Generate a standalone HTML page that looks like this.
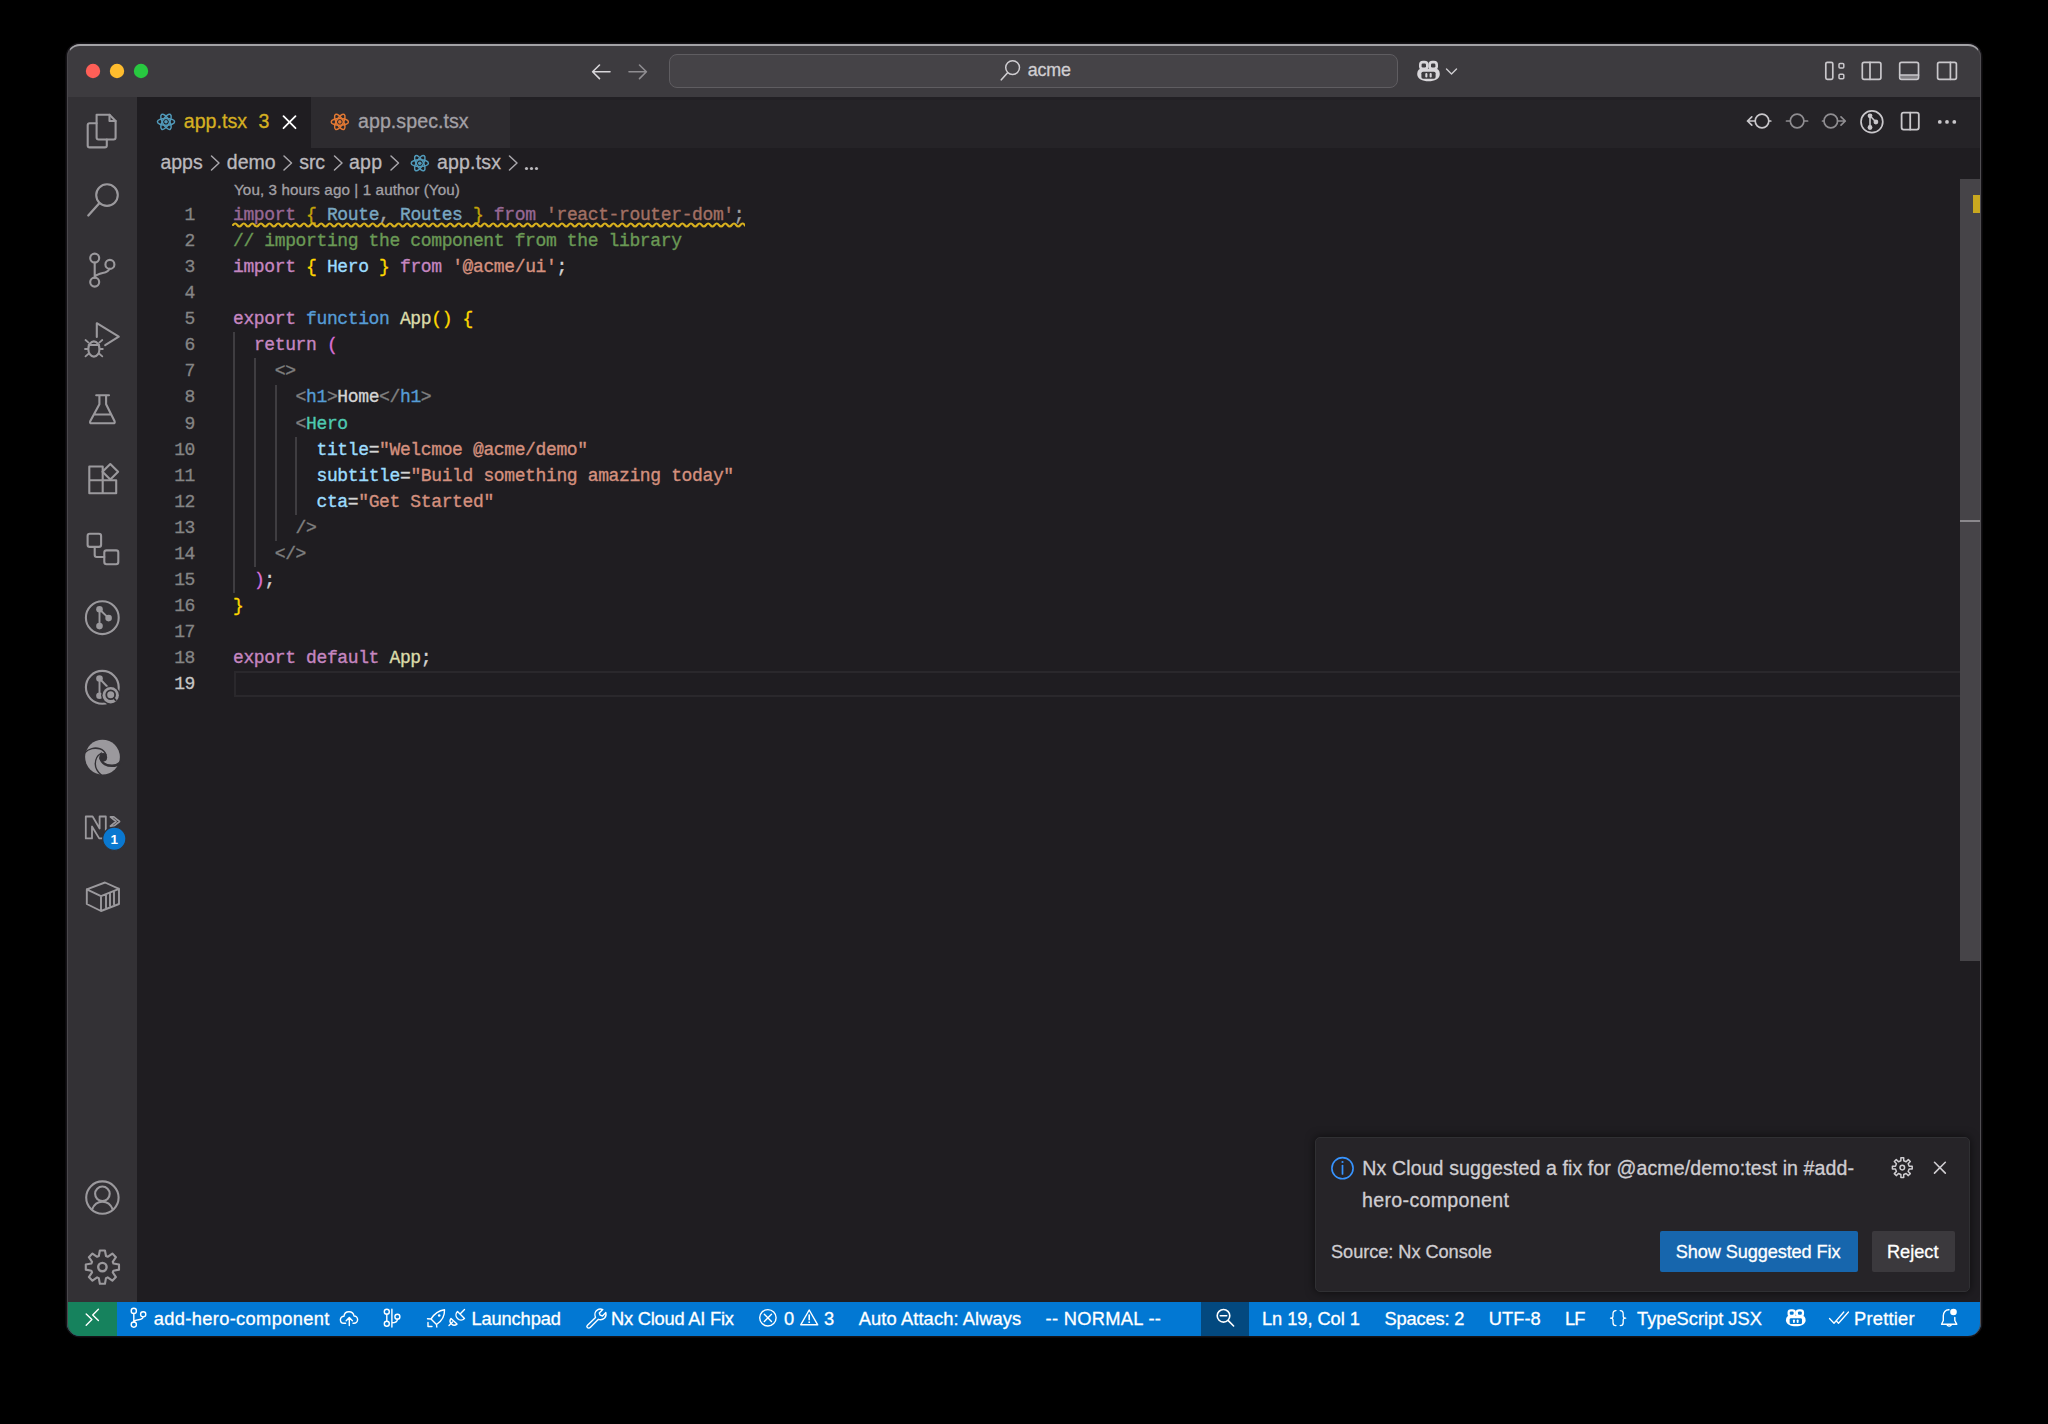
<!DOCTYPE html>
<html><head><meta charset="utf-8">
<style>
*{margin:0;padding:0;box-sizing:border-box}
html,body{width:2048px;height:1424px;background:#000;overflow:hidden}
body{position:relative;font-family:"Liberation Sans",sans-serif}
.a{position:absolute;white-space:pre;-webkit-text-stroke:0.3px currentColor}
#win{position:absolute;left:67px;top:44px;width:1914px;height:1292px;border-radius:13px;background:#1f1d21;overflow:hidden;box-shadow:0 0 0 1.5px #141216}
#P{position:absolute;left:-67px;top:-44px;width:2048px;height:1424px}
#hl{position:absolute;left:67px;top:44px;width:1914px;height:1292px;border-radius:13px;border-top:2px solid #a3a2a6;border-left:1.5px solid #4a484c;border-right:1.5px solid #504e52;pointer-events:none;z-index:50}
.bx{position:absolute}
.code{position:absolute;left:233px;font-family:"Liberation Mono",monospace;font-size:18px;letter-spacing:-0.37px;white-space:pre;-webkit-text-stroke:0.35px currentColor;height:26.04px;line-height:26.04px;color:#d4d4d4}
.ln{position:absolute;left:140px;width:55px;text-align:right;font-family:"Liberation Mono",monospace;-webkit-text-stroke:0.3px currentColor;font-size:18px;letter-spacing:-0.37px;height:26.04px;line-height:26.04px;color:#858585}
.k{color:#c586c0}.f{color:#569cd6}.b1{color:#ffd700}.b2{color:#da70d6}.v{color:#9cdcfe}.s{color:#d4907e}.c{color:#6a9955}.fn{color:#dcdcaa}.p{color:#808080}.t{color:#4ec9b0}.w{color:#d4d4d4}
svg.ov{position:absolute;left:0;top:0;width:2048px;height:1424px;overflow:visible}
</style></head>
<body>
<div id="win"><div id="P">
<div class="bx" style="left:66px;top:44px;width:1916px;height:53px;background:#3d3b3f;"></div>
<div class="bx" style="left:66px;top:97px;width:71px;height:1205px;background:#333135;"></div>
<div class="bx" style="left:137px;top:97px;width:1845px;height:51px;background:#252327;"></div>
<div class="bx" style="left:137px;top:97px;width:174px;height:51px;background:#1f1d21;"></div>
<div class="bx" style="left:311px;top:97px;width:199px;height:51px;background:#2d2b2f;"></div>
<div class="bx" style="left:510px;top:97px;width:1472px;height:3px;background:#222024;"></div>
<div class="bx" style="left:1960px;top:179px;width:21px;height:782px;background:#464448;"></div>
<div class="bx" style="left:1960px;top:520px;width:21px;height:2px;background:#8a888c;"></div>
<div class="bx" style="left:1973px;top:195px;width:8px;height:18px;background:#c9a81f;"></div>
<div class="bx" style="left:234px;top:671px;width:1726px;height:26px;border:2px solid #2a282c;border-right:none"></div>
<div class="bx" style="left:66px;top:1302px;width:1916px;height:34px;background:#0278d3;"></div>
<div class="bx" style="left:66px;top:1302px;width:51px;height:34px;background:#16825d;"></div>
<div class="bx" style="left:1201px;top:1302px;width:48px;height:34px;background:#03497f;"></div>
<div class="bx" style="left:669px;top:54px;width:729px;height:34px;border-radius:8px;background:#454347;border:1.5px solid #5f5d61"></div>
<div class="a t0" style="left:1027.70px;top:62.35px;font-size:17.9px;line-height:17.9px;color:#d0ced2;letter-spacing:-0.15px;">acme</div>
<div class="a t0" style="left:183.80px;top:111.81px;font-size:19.6px;line-height:19.6px;color:#d5b021;">app.tsx</div>
<div class="a t0" style="left:258.50px;top:111.81px;font-size:19.6px;line-height:19.6px;color:#d5b021;">3</div>
<div class="a t0" style="left:358.00px;top:112.11px;font-size:19.6px;line-height:19.6px;color:#a3a1a6;letter-spacing:0.059px;">app.spec.tsx</div>
<div class="a t0" style="left:160.50px;top:153.19px;font-size:19.5px;line-height:19.5px;color:#bbb9bd;letter-spacing:-0.033px;">apps</div>
<div class="a t0" style="left:226.80px;top:153.19px;font-size:19.5px;line-height:19.5px;color:#bbb9bd;">demo</div>
<div class="a t0" style="left:299.30px;top:153.19px;font-size:19.5px;line-height:19.5px;color:#bbb9bd;letter-spacing:-0.15px;">src</div>
<div class="a t0" style="left:349.00px;top:153.19px;font-size:19.5px;line-height:19.5px;color:#bbb9bd;letter-spacing:0.225px;">app</div>
<div class="a t0" style="left:437.00px;top:153.19px;font-size:19.5px;line-height:19.5px;color:#bbb9bd;letter-spacing:0.192px;">app.tsx</div>
<div class="a t0" style="left:234.00px;top:182.43px;font-size:15.2px;line-height:15.2px;color:#a3a1a6;letter-spacing:0.108px;">You, 3 hours ago | 1 author (You)</div>
<div class="ln" style="top:202.19px;color:#858585">1</div>
<div class="code" style="top:202.19px;opacity:0.72;"><span class="k">import</span><span class="w"> </span><span class="b1">{</span><span class="w"> </span><span class="v">Route</span><span class="w">, </span><span class="v">Routes</span><span class="w"> </span><span class="b1">}</span><span class="w"> </span><span class="k">from</span><span class="w"> </span><span class="s">&#x27;react-router-dom&#x27;</span><span class="w">;</span></div>
<div class="ln" style="top:228.23px;color:#858585">2</div>
<div class="code" style="top:228.23px;"><span class="c">// importing the component from the library</span></div>
<div class="ln" style="top:254.27px;color:#858585">3</div>
<div class="code" style="top:254.27px;"><span class="k">import</span><span class="w"> </span><span class="b1">{</span><span class="w"> </span><span class="v">Hero</span><span class="w"> </span><span class="b1">}</span><span class="w"> </span><span class="k">from</span><span class="w"> </span><span class="s">&#x27;@acme/ui&#x27;</span><span class="w">;</span></div>
<div class="ln" style="top:280.31px;color:#858585">4</div>
<div class="ln" style="top:306.35px;color:#858585">5</div>
<div class="code" style="top:306.35px;"><span class="k">export</span><span class="w"> </span><span class="f">function</span><span class="w"> </span><span class="fn">App</span><span class="b1">()</span><span class="w"> </span><span class="b1">{</span></div>
<div class="ln" style="top:332.39px;color:#858585">6</div>
<div class="code" style="top:332.39px;"><span class="w">  </span><span class="k">return</span><span class="w"> </span><span class="b2">(</span></div>
<div class="ln" style="top:358.43px;color:#858585">7</div>
<div class="code" style="top:358.43px;"><span class="w">    </span><span class="p">&lt;&gt;</span></div>
<div class="ln" style="top:384.47px;color:#858585">8</div>
<div class="code" style="top:384.47px;"><span class="w">      </span><span class="p">&lt;</span><span class="f">h1</span><span class="p">&gt;</span><span class="w">Home</span><span class="p">&lt;/</span><span class="f">h1</span><span class="p">&gt;</span></div>
<div class="ln" style="top:410.51px;color:#858585">9</div>
<div class="code" style="top:410.51px;"><span class="w">      </span><span class="p">&lt;</span><span class="t">Hero</span></div>
<div class="ln" style="top:436.55px;color:#858585">10</div>
<div class="code" style="top:436.55px;"><span class="w">        </span><span class="v">title</span><span class="w">=</span><span class="s">&quot;Welcmoe @acme/demo&quot;</span></div>
<div class="ln" style="top:462.59px;color:#858585">11</div>
<div class="code" style="top:462.59px;"><span class="w">        </span><span class="v">subtitle</span><span class="w">=</span><span class="s">&quot;Build something amazing today&quot;</span></div>
<div class="ln" style="top:488.63px;color:#858585">12</div>
<div class="code" style="top:488.63px;"><span class="w">        </span><span class="v">cta</span><span class="w">=</span><span class="s">&quot;Get Started&quot;</span></div>
<div class="ln" style="top:514.67px;color:#858585">13</div>
<div class="code" style="top:514.67px;"><span class="w">      </span><span class="p">/&gt;</span></div>
<div class="ln" style="top:540.71px;color:#858585">14</div>
<div class="code" style="top:540.71px;"><span class="w">    </span><span class="p">&lt;/&gt;</span></div>
<div class="ln" style="top:566.75px;color:#858585">15</div>
<div class="code" style="top:566.75px;"><span class="w">  </span><span class="b2">)</span><span class="w">;</span></div>
<div class="ln" style="top:592.79px;color:#858585">16</div>
<div class="code" style="top:592.79px;"><span class="b1">}</span></div>
<div class="ln" style="top:618.83px;color:#858585">17</div>
<div class="ln" style="top:644.87px;color:#858585">18</div>
<div class="code" style="top:644.87px;"><span class="k">export</span><span class="w"> </span><span class="k">default</span><span class="w"> </span><span class="fn">App</span><span class="w">;</span></div>
<div class="ln" style="top:670.91px;color:#c6c6c6">19</div>
<div class="bx" style="left:232.8px;top:332.4px;width:2px;height:260.4px;background:#3f3d41;"></div>
<div class="bx" style="left:253.7px;top:358.4px;width:2px;height:208.3px;background:#3f3d41;"></div>
<div class="bx" style="left:274.5px;top:384.5px;width:2px;height:156.2px;background:#3f3d41;"></div>
<div class="bx" style="left:295.4px;top:436.6px;width:2px;height:78.1px;background:#3f3d41;"></div>
<div class="a t0" style="left:153.70px;top:1309.51px;font-size:18.3px;line-height:18.3px;color:#ffffff;letter-spacing:0.347px;">add-hero-component</div>
<div class="a t0" style="left:471.40px;top:1309.51px;font-size:18.3px;line-height:18.3px;color:#ffffff;letter-spacing:-0.119px;">Launchpad</div>
<div class="a t0" style="left:611.00px;top:1309.51px;font-size:18.3px;line-height:18.3px;color:#ffffff;letter-spacing:-0.214px;">Nx Cloud AI Fix</div>
<div class="a t0" style="left:784.00px;top:1309.51px;font-size:18.3px;line-height:18.3px;color:#ffffff;">0</div>
<div class="a t0" style="left:824.00px;top:1309.51px;font-size:18.3px;line-height:18.3px;color:#ffffff;">3</div>
<div class="a t0" style="left:858.70px;top:1309.51px;font-size:18.3px;line-height:18.3px;color:#ffffff;letter-spacing:0.111px;">Auto Attach: Always</div>
<div class="a t0" style="left:1045.50px;top:1309.51px;font-size:18.3px;line-height:18.3px;color:#ffffff;letter-spacing:0.305px;">-- NORMAL --</div>
<div class="a t0" style="left:1262.00px;top:1309.51px;font-size:18.3px;line-height:18.3px;color:#ffffff;letter-spacing:-0.064px;">Ln 19, Col 1</div>
<div class="a t0" style="left:1384.50px;top:1309.51px;font-size:18.3px;line-height:18.3px;color:#ffffff;letter-spacing:-0.163px;">Spaces: 2</div>
<div class="a t0" style="left:1488.80px;top:1309.51px;font-size:18.3px;line-height:18.3px;color:#ffffff;letter-spacing:0.037px;">UTF-8</div>
<div class="a t0" style="left:1565.00px;top:1309.51px;font-size:18.3px;line-height:18.3px;color:#ffffff;letter-spacing:-1.0px;">LF</div>
<div class="a t0" style="left:1637.00px;top:1309.51px;font-size:18.3px;line-height:18.3px;color:#ffffff;letter-spacing:-0.008px;">TypeScript JSX</div>
<div class="a t0" style="left:1854.00px;top:1309.51px;font-size:18.3px;line-height:18.3px;color:#ffffff;letter-spacing:0.229px;">Prettier</div>
<div class="bx" style="left:1315px;top:1137px;width:655px;height:155px;background:#262428;border:1px solid #303033;border-radius:5px;box-shadow:0 0 10px rgba(0,0,0,0.6)"></div>
<div class="a t0" style="left:1362.30px;top:1159.01px;font-size:19.6px;line-height:19.6px;color:#cfcdd1;letter-spacing:0.09px;">Nx Cloud suggested a fix for @acme/demo:test in #add-</div>
<div class="a t0" style="left:1362.00px;top:1191.41px;font-size:19.6px;line-height:19.6px;color:#cfcdd1;letter-spacing:0.327px;">hero-component</div>
<div class="a t0" style="left:1331.00px;top:1242.59px;font-size:18.2px;line-height:18.2px;color:#cfcdd1;letter-spacing:-0.05px;">Source: Nx Console</div>
<div class="bx" style="left:1660px;top:1231px;width:198px;height:41px;background:#1766ad;border-radius:2px;"></div>
<div class="a t0" style="left:1675.70px;top:1242.59px;font-size:18.2px;line-height:18.2px;color:#ffffff;letter-spacing:-0.115px;">Show Suggested Fix</div>
<div class="bx" style="left:1872px;top:1231px;width:83px;height:41px;background:#3b393d;border-radius:2px;"></div>
<div class="a t0" style="left:1887.00px;top:1242.59px;font-size:18.2px;line-height:18.2px;color:#ffffff;letter-spacing:-0.02px;">Reject</div>
<svg class="ov" viewBox="0 0 2048 1424" fill="none" stroke-linecap="round" stroke-linejoin="round">
<circle cx="93" cy="71" r="7.2" fill="#fe5f57"/>
<circle cx="117" cy="71" r="7.2" fill="#febc2e"/>
<circle cx="141" cy="71" r="7.2" fill="#28c840"/>
<ellipse cx="166" cy="121.8" rx="8.6" ry="3.4" transform="rotate(0 166 121.8)" stroke="#519aba" stroke-width="1.5"/><ellipse cx="166" cy="121.8" rx="8.6" ry="3.4" transform="rotate(60 166 121.8)" stroke="#519aba" stroke-width="1.5"/><ellipse cx="166" cy="121.8" rx="8.6" ry="3.4" transform="rotate(120 166 121.8)" stroke="#519aba" stroke-width="1.5"/><circle cx="166" cy="121.8" r="1.8" fill="#519aba"/>
<ellipse cx="339.8" cy="121.9" rx="8.6" ry="3.4" transform="rotate(0 339.8 121.9)" stroke="#e37933" stroke-width="1.5"/><ellipse cx="339.8" cy="121.9" rx="8.6" ry="3.4" transform="rotate(60 339.8 121.9)" stroke="#e37933" stroke-width="1.5"/><ellipse cx="339.8" cy="121.9" rx="8.6" ry="3.4" transform="rotate(120 339.8 121.9)" stroke="#e37933" stroke-width="1.5"/><circle cx="339.8" cy="121.9" r="1.8" fill="#e37933"/>
<ellipse cx="419.8" cy="163.2" rx="8.6" ry="3.4" transform="rotate(0 419.8 163.2)" stroke="#519aba" stroke-width="1.5"/><ellipse cx="419.8" cy="163.2" rx="8.6" ry="3.4" transform="rotate(60 419.8 163.2)" stroke="#519aba" stroke-width="1.5"/><ellipse cx="419.8" cy="163.2" rx="8.6" ry="3.4" transform="rotate(120 419.8 163.2)" stroke="#519aba" stroke-width="1.5"/><circle cx="419.8" cy="163.2" r="1.8" fill="#519aba"/>
<path d="M283.5 116.2 L295.5 128.2 M295.5 116.2 L283.5 128.2" stroke="#ffffff" stroke-width="1.8"/>
<path d="M211.5 156 L219.0 163 L211.5 170" stroke="#a8a6ab" stroke-width="1.5"/>
<path d="M284 156 L291.5 163 L284 170" stroke="#a8a6ab" stroke-width="1.5"/>
<path d="M334.5 156 L342.0 163 L334.5 170" stroke="#a8a6ab" stroke-width="1.5"/>
<path d="M391 156 L398.5 163 L391 170" stroke="#a8a6ab" stroke-width="1.5"/>
<path d="M509.5 156 L517.0 163 L509.5 170" stroke="#a8a6ab" stroke-width="1.5"/>
<circle cx="526.5" cy="168.5" r="1.6" fill="#bbb9bd"/>
<circle cx="531.5" cy="168.5" r="1.6" fill="#bbb9bd"/>
<circle cx="536.5" cy="168.5" r="1.6" fill="#bbb9bd"/>
<clipPath id="sqc"><rect x="232" y="215" width="513" height="20"/></clipPath><path d="M233 225 q 2.15 -2.9 4.30 0 q 2.15 2.9 4.30 0 q 2.15 -2.9 4.30 0 q 2.15 2.9 4.30 0 q 2.15 -2.9 4.30 0 q 2.15 2.9 4.30 0 q 2.15 -2.9 4.30 0 q 2.15 2.9 4.30 0 q 2.15 -2.9 4.30 0 q 2.15 2.9 4.30 0 q 2.15 -2.9 4.30 0 q 2.15 2.9 4.30 0 q 2.15 -2.9 4.30 0 q 2.15 2.9 4.30 0 q 2.15 -2.9 4.30 0 q 2.15 2.9 4.30 0 q 2.15 -2.9 4.30 0 q 2.15 2.9 4.30 0 q 2.15 -2.9 4.30 0 q 2.15 2.9 4.30 0 q 2.15 -2.9 4.30 0 q 2.15 2.9 4.30 0 q 2.15 -2.9 4.30 0 q 2.15 2.9 4.30 0 q 2.15 -2.9 4.30 0 q 2.15 2.9 4.30 0 q 2.15 -2.9 4.30 0 q 2.15 2.9 4.30 0 q 2.15 -2.9 4.30 0 q 2.15 2.9 4.30 0 q 2.15 -2.9 4.30 0 q 2.15 2.9 4.30 0 q 2.15 -2.9 4.30 0 q 2.15 2.9 4.30 0 q 2.15 -2.9 4.30 0 q 2.15 2.9 4.30 0 q 2.15 -2.9 4.30 0 q 2.15 2.9 4.30 0 q 2.15 -2.9 4.30 0 q 2.15 2.9 4.30 0 q 2.15 -2.9 4.30 0 q 2.15 2.9 4.30 0 q 2.15 -2.9 4.30 0 q 2.15 2.9 4.30 0 q 2.15 -2.9 4.30 0 q 2.15 2.9 4.30 0 q 2.15 -2.9 4.30 0 q 2.15 2.9 4.30 0 q 2.15 -2.9 4.30 0 q 2.15 2.9 4.30 0 q 2.15 -2.9 4.30 0 q 2.15 2.9 4.30 0 q 2.15 -2.9 4.30 0 q 2.15 2.9 4.30 0 q 2.15 -2.9 4.30 0 q 2.15 2.9 4.30 0 q 2.15 -2.9 4.30 0 q 2.15 2.9 4.30 0 q 2.15 -2.9 4.30 0 q 2.15 2.9 4.30 0 q 2.15 -2.9 4.30 0 q 2.15 2.9 4.30 0 q 2.15 -2.9 4.30 0 q 2.15 2.9 4.30 0 q 2.15 -2.9 4.30 0 q 2.15 2.9 4.30 0 q 2.15 -2.9 4.30 0 q 2.15 2.9 4.30 0 q 2.15 -2.9 4.30 0 q 2.15 2.9 4.30 0 q 2.15 -2.9 4.30 0 q 2.15 2.9 4.30 0 q 2.15 -2.9 4.30 0 q 2.15 2.9 4.30 0 q 2.15 -2.9 4.30 0 q 2.15 2.9 4.30 0 q 2.15 -2.9 4.30 0 q 2.15 2.9 4.30 0 q 2.15 -2.9 4.30 0 q 2.15 2.9 4.30 0 q 2.15 -2.9 4.30 0 q 2.15 2.9 4.30 0 q 2.15 -2.9 4.30 0 q 2.15 2.9 4.30 0 q 2.15 -2.9 4.30 0 q 2.15 2.9 4.30 0 q 2.15 -2.9 4.30 0 q 2.15 2.9 4.30 0 q 2.15 -2.9 4.30 0 q 2.15 2.9 4.30 0 q 2.15 -2.9 4.30 0 q 2.15 2.9 4.30 0 q 2.15 -2.9 4.30 0 q 2.15 2.9 4.30 0 q 2.15 -2.9 4.30 0 q 2.15 2.9 4.30 0 q 2.15 -2.9 4.30 0 q 2.15 2.9 4.30 0 q 2.15 -2.9 4.30 0 q 2.15 2.9 4.30 0 q 2.15 -2.9 4.30 0 q 2.15 2.9 4.30 0 q 2.15 -2.9 4.30 0 q 2.15 2.9 4.30 0 q 2.15 -2.9 4.30 0 q 2.15 2.9 4.30 0 q 2.15 -2.9 4.30 0 q 2.15 2.9 4.30 0 q 2.15 -2.9 4.30 0 q 2.15 2.9 4.30 0 q 2.15 -2.9 4.30 0 q 2.15 2.9 4.30 0 q 2.15 -2.9 4.30 0 q 2.15 2.9 4.30 0 q 2.15 -2.9 4.30 0 q 2.15 2.9 4.30 0 q 2.15 -2.9 4.30 0 q 2.15 2.9 4.30 0 q 2.15 -2.9 4.30 0 q 2.15 2.9 4.30 0" stroke="#d7b01e" stroke-width="2.1" clip-path="url(#sqc)"/>
<path d="M610 71.8 H593 M599.5 65 L592.6 71.8 L599.5 78.6" stroke="#d8d6da" stroke-width="1.6"/>
<path d="M629 71.8 H646 M639.5 65 L646.4 71.8 L639.5 78.6" stroke="#8f8d91" stroke-width="1.6"/>
<circle cx="1012.6" cy="67.6" r="6.9" stroke="#cfcdd1" stroke-width="1.5"/><path d="M1007.6 72.8 L1001.3 79.8" stroke="#cfcdd1" stroke-width="1.6"/>
<g transform="translate(1417 60.5) scale(1.0 1.0)"><path d="M0.2 13.5 C0.2 10 2 8.2 4.5 8.2 H18.5 C21 8.2 22.8 10 22.8 13.5 C22.8 18.3 17.5 20.8 11.5 20.8 C5.5 20.8 0.2 18.3 0.2 13.5 Z" fill="#d8d6da"/><rect x="4.4" y="11.2" width="14.2" height="7" rx="1.6" fill="#3d3b3f"/><rect x="8.3" y="12.6" width="2.1" height="4.3" rx="1" fill="#d8d6da"/><rect x="12.6" y="12.6" width="2.1" height="4.3" rx="1" fill="#d8d6da"/><rect x="2" y="0.3" width="9.6" height="9.4" rx="4" fill="#d8d6da"/><rect x="11.4" y="0.3" width="9.6" height="9.4" rx="4" fill="#d8d6da"/><rect x="4.6" y="3" width="4.4" height="4" rx="1.3" fill="#3d3b3f"/><rect x="14" y="3" width="4.4" height="4" rx="1.3" fill="#3d3b3f"/></g>
<path d="M1446.5 69 L1451.5 74 L1456.5 69" stroke="#cfcdd1" stroke-width="1.4"/>
<rect x="1825.8" y="62.3" width="7" height="17" rx="1.5" stroke="#c9c7cb" stroke-width="1.7"/><rect x="1839" y="63.6" width="4.8" height="4.5" rx="1" stroke="#c9c7cb" stroke-width="1.5"/><rect x="1839" y="74.2" width="4.8" height="4.5" rx="1" stroke="#c9c7cb" stroke-width="1.5"/>
<rect x="1862.3" y="62.3" width="18.6" height="17" rx="1.8" stroke="#c9c7cb" stroke-width="1.7"/><path d="M1870 62.3 V79.3" stroke="#c9c7cb" stroke-width="1.7"/>
<rect x="1899.7" y="62.3" width="18.8" height="17" rx="1.8" stroke="#c9c7cb" stroke-width="1.7"/><path d="M1899.7 75 H1918.5" stroke="#c9c7cb" stroke-width="1.7"/><rect x="1900.5" y="75" width="17.2" height="3.6" fill="#c9c7cb" opacity="0.5"/>
<rect x="1937.6" y="62.3" width="18.8" height="17" rx="1.8" stroke="#c9c7cb" stroke-width="1.7"/><path d="M1950.4 62.3 V79.3" stroke="#c9c7cb" stroke-width="1.7"/>
<circle cx="1762" cy="121" r="6.8" stroke="#c9c7cb" stroke-width="1.7"/><path d="M1755.2 121 H1747.5 M1751.8 116.8 L1747.5 121 L1751.8 125.2 M1768.8 121 H1770.8" stroke="#c9c7cb" stroke-width="1.7"/>
<circle cx="1797.1" cy="121" r="6.8" stroke="#8f8d91" stroke-width="1.7"/><path d="M1786.5 121 H1790.3 M1803.9 121 H1807.6" stroke="#8f8d91" stroke-width="1.7"/>
<circle cx="1830.8" cy="121" r="6.8" stroke="#8f8d91" stroke-width="1.7"/><path d="M1822.5 121 H1824 M1837.6 121 H1845.3 M1841 116.8 L1845.3 121 L1841 125.2" stroke="#8f8d91" stroke-width="1.7"/>
<circle cx="1871.9" cy="121.8" r="10.9" stroke="#c9c7cb" stroke-width="1.7"/><path d="M1870 115.8 V127.5 M1870 115.8 L1875.9 122" stroke="#c9c7cb" stroke-width="1.6"/><circle cx="1870" cy="115.8" r="2.4" fill="#c9c7cb"/><circle cx="1875.9" cy="122" r="2.4" fill="#c9c7cb"/><circle cx="1870" cy="127.5" r="2.4" fill="#c9c7cb"/>
<rect x="1901.6" y="112.6" width="17.2" height="17" rx="2" stroke="#c9c7cb" stroke-width="1.8"/><path d="M1910.2 112.6 V129.6" stroke="#c9c7cb" stroke-width="1.8"/>
<circle cx="1939.8" cy="121.9" r="1.9" fill="#c9c7cb"/>
<circle cx="1947" cy="121.9" r="1.9" fill="#c9c7cb"/>
<circle cx="1954.3" cy="121.9" r="1.9" fill="#c9c7cb"/>
<path d="M96.6 114.8 H109.5 L115.6 121 V137.5 Q115.6 139.5 113.6 139.5 H98.6 Q96.6 139.5 96.6 137.5 Z" stroke="#9b999d" stroke-width="2.1"/><path d="M109.5 114.8 V121 H115.6" stroke="#9b999d" stroke-width="2.1"/>
<path d="M96.6 123.3 H89.7 Q87.7 123.3 87.7 125.3 V145.4 Q87.7 147.4 89.7 147.4 H104.8 Q106.8 147.4 106.8 145.4 V139.5" stroke="#9b999d" stroke-width="2.1"/>
<circle cx="107" cy="195.1" r="10.8" stroke="#9b999d" stroke-width="2.1"/><path d="M99.3 203.2 L88.3 215.5" stroke="#9b999d" stroke-width="2.3000000000000003"/>
<circle cx="94.7" cy="258.1" r="4.5" stroke="#9b999d" stroke-width="2.1"/><circle cx="94.7" cy="282.1" r="4.5" stroke="#9b999d" stroke-width="2.1"/><circle cx="109.9" cy="264.4" r="4.5" stroke="#9b999d" stroke-width="2.1"/><path d="M94.7 262.6 V277.6 M109.3 268.9 C108.5 274 99 272 94.9 276.5" stroke="#9b999d" stroke-width="2.1"/>
<path d="M96.8 337 V323.2 L118.8 336.6 L105.2 345.2" stroke="#9b999d" stroke-width="2.1"/>
<ellipse cx="93.9" cy="349" rx="5.6" ry="7.6" stroke="#9b999d" stroke-width="2.1"/><path d="M88.6 345 H99.2 M88.5 342.6 L85.5 340 M99.3 342.6 L102.3 340 M88.3 349 H85 M99.5 349 H102.8 M88.8 353.5 L85.5 356.4 M99 353.5 L102.3 356.4" stroke="#9b999d" stroke-width="1.8"/>
<path d="M96.2 395.3 H109 M99.4 395.5 V404.2 L90.2 421.3 Q89.5 423.3 91.6 423.3 H113.2 Q115.3 423.3 114.6 421.3 L106.1 404.2 V395.5 M93.8 414.5 H110.8" stroke="#9b999d" stroke-width="2.1"/>
<path d="M89.3 466.5 H102.7 V493.3 H89.3 Z M89.3 480.2 H116.2 V493.3 H102.7" stroke="#9b999d" stroke-width="2.1"/><path d="M110.3 464 L118.1 471.8 L110.3 479.6 L102.5 471.8 Z" stroke="#9b999d" stroke-width="2.1"/>
<rect x="87.6" y="533.8" width="13.5" height="13.1" rx="2.2" stroke="#9b999d" stroke-width="2.1"/><rect x="104.3" y="550.4" width="14" height="13.8" rx="2.2" stroke="#9b999d" stroke-width="2.1"/><path d="M94.7 547 V555 Q94.7 557 96.7 557 H104.3" stroke="#9b999d" stroke-width="2.1"/>
<circle cx="102.3" cy="617.7" r="16.4" stroke="#9b999d" stroke-width="2.1"/><path d="M99.5 609.2 V626.1 M99.5 609.2 L108.6 618.1" stroke="#9b999d" stroke-width="1.9"/><circle cx="99.5" cy="609.2" r="3.3" fill="#9b999d"/><circle cx="108.6" cy="618.1" r="3.3" fill="#9b999d"/><circle cx="99.5" cy="626.1" r="3.3" fill="#9b999d"/>
<circle cx="102.3" cy="687.3" r="16.4" stroke="#9b999d" stroke-width="2.1"/><path d="M99.5 678.5 V695.7 M99.5 678.5 L107.6 687" stroke="#9b999d" stroke-width="1.9"/><circle cx="99.5" cy="678.5" r="3.3" fill="#9b999d"/><circle cx="99.5" cy="695.7" r="3.3" fill="#9b999d"/><circle cx="110.7" cy="695.3" r="9.6" fill="#333135"/><circle cx="110.7" cy="695.3" r="8.2" fill="#9b999d"/><circle cx="110.7" cy="694.8" r="4.4" stroke="#333135" stroke-width="1.8"/><path d="M113.8 698.2 L115.8 700.4" stroke="#333135" stroke-width="1.8"/>
<circle cx="102.5" cy="757.1" r="17.4" fill="#9b999d"/><path d="M84.5 753 C88.5 748.5 95 747.2 99.8 748.8 C103 749.8 105 752 106 754.8" stroke="#333135" stroke-width="1.5"/><ellipse cx="103.2" cy="757.2" rx="3.9" ry="4.3" fill="#333135"/><path d="M100.6 758.5 C102 763.5 107 765.8 112 765.8 C115.5 765.8 118.5 764.5 121 762" stroke="#333135" stroke-width="2.6"/><path d="M101.5 753 C97.5 755.2 95.3 759.5 95.3 764 C95.3 768.3 97.5 771.8 101.3 775" stroke="#333135" stroke-width="1.4"/>
<path d="M85.8 816.5 H92.6 L99.6 828.5 V816.5 H105.8 V838.4 H99.2 L92 826.5 V838.4 H85.8 Z" stroke="#9b999d" stroke-width="1.8"/><path d="M110.3 816.9 H113.8 L119.6 821.5 L113.8 826.1 H110.3 L116.1 821.5 Z" stroke="#9b999d" stroke-width="1.6"/>
<circle cx="114.3" cy="838.7" r="11.6" fill="#0a78d0" stroke="#333135" stroke-width="1.2"/>
<text x="114.3" y="843.6" text-anchor="middle" font-family="Liberation Sans" font-weight="bold" font-size="13.5" fill="#ffffff">1</text>
<path d="M86.8 889.3 L105 882.5 L119 888.8 L101 896.2 Z M86.8 889.3 V904 L101 911 L119 904 V888.8 M101 896.2 V911 M106 895 V907.5 M110 893.3 V905.8 M114 891.6 V904.2" stroke="#9b999d" stroke-width="1.9"/>
<circle cx="102.4" cy="1197.6" r="16.2" stroke="#9b999d" stroke-width="2.1"/><circle cx="102.4" cy="1193.8" r="7.3" stroke="#9b999d" stroke-width="2.1"/><path d="M92 1209.5 C94 1204.5 97.8 1201.8 102.4 1201.8 C107 1201.8 110.8 1204.5 112.8 1209.5" stroke="#9b999d" stroke-width="2.1"/>
<path d="M113.44 1263.52 L119.01 1264.55 L119.01 1269.65 L113.44 1270.68 L112.73 1272.37 L115.94 1277.04 L112.34 1280.64 L107.67 1277.43 L105.98 1278.14 L104.95 1283.71 L99.85 1283.71 L98.82 1278.14 L97.13 1277.43 L92.46 1280.64 L88.86 1277.04 L92.07 1272.37 L91.36 1270.68 L85.79 1269.65 L85.79 1264.55 L91.36 1263.52 L92.07 1261.83 L88.86 1257.16 L92.46 1253.56 L97.13 1256.77 L98.82 1256.06 L99.85 1250.49 L104.95 1250.49 L105.98 1256.06 L107.67 1256.77 L112.34 1253.56 L115.94 1257.16 L112.73 1261.83 Z" stroke="#9b999d" stroke-width="2.1"/><circle cx="102.4" cy="1267.1" r="4.2" stroke="#9b999d" stroke-width="2.4"/>
<path d="M86.2 1325.2 L91.9 1319.6 L86.2 1314" stroke="#ffffff" stroke-width="1.4"/><path d="M98.4 1309.2 L92.7 1314.9 L98.4 1320.6" stroke="#ffffff" stroke-width="1.4"/>
<circle cx="133.8" cy="1310.9" r="2.6" stroke="#ffffff" stroke-width="1.4"/><circle cx="133.8" cy="1324.6" r="2.6" stroke="#ffffff" stroke-width="1.4"/><circle cx="143.2" cy="1314.3" r="2.6" stroke="#ffffff" stroke-width="1.4"/><path d="M133.8 1313.5 V1322 M143 1317 C143 1321 134.5 1318.5 133.9 1322" stroke="#ffffff" stroke-width="1.4"/>
<path d="M345.6 1323.2 H343.8 C341.6 1323.2 340.4 1321.6 340.4 1319.7 C340.4 1317.7 342 1316.2 344 1316.3 C344.2 1313.6 346.4 1311.8 349 1311.8 C351.6 1311.8 353.6 1313.4 354 1316 C356 1316 357.6 1317.6 357.6 1319.6 C357.6 1321.6 356 1323.2 354 1323.2 H353" stroke="#ffffff" stroke-width="1.4"/><path d="M349.3 1325.5 V1317.8 M346.2 1320.8 L349.3 1317.6 L352.4 1320.8" stroke="#ffffff" stroke-width="1.4"/>
<circle cx="386.8" cy="1311.7" r="2.5" stroke="#ffffff" stroke-width="1.4"/><circle cx="386.8" cy="1323.8" r="2.5" stroke="#ffffff" stroke-width="1.4"/><circle cx="397.4" cy="1316.8" r="2.5" stroke="#ffffff" stroke-width="1.4"/><path d="M386.8 1314.2 V1321.3 M391.9 1309.2 V1327.1 M397.4 1319.3 C397.4 1322 395 1322.8 391.9 1322.8" stroke="#ffffff" stroke-width="1.4"/>
<path d="M444.5 1309.8 C439 1310.5 434.5 1313.5 431 1319 L436.5 1324.5 C442 1321 444.8 1316 444.5 1309.8 Z M431 1319 L427.5 1318.8 M436.5 1324.5 L436.8 1327 M428 1322.5 V1326.5 H432" stroke="#ffffff" stroke-width="1.4"/><circle cx="439.2" cy="1315.5" r="1.3" fill="#ffffff"/>
<path d="M464.5 1309.5 L460.3 1313.7 M457.5 1311.5 C455.5 1313.5 455.5 1316.5 457.5 1318.5 C459.5 1320.5 462.5 1320.5 464.5 1318.5 Z M449 1325.6 L452.5 1322.1 M451 1318.5 C449.5 1320.5 449.8 1322.5 451.5 1324 C453 1325.5 455.2 1325.6 457 1324.1 Z" stroke="#ffffff" stroke-width="1.4"/>
<path d="M587.3 1325.6 L595.5 1317.5 C594.3 1314.5 595 1311.2 597.5 1309.8 C599.2 1308.8 601.2 1308.9 602.8 1309.6 L599.3 1313 L600.2 1315.2 L602.5 1316 L605.8 1312.6 C606.3 1314.5 606 1316.5 604.6 1318 C603 1319.5 600.5 1320 598.4 1319.3 L590.2 1327.5 C589.4 1328.3 588.1 1328.3 587.3 1327.5 C586.5 1326.7 586.5 1326.4 587.3 1325.6 Z" stroke="#ffffff" stroke-width="1.4"/>
<circle cx="767.9" cy="1317.8" r="8.2" stroke="#ffffff" stroke-width="1.4"/><path d="M764.3 1314.2 L771.5 1321.4 M771.5 1314.2 L764.3 1321.4" stroke="#ffffff" stroke-width="1.4"/>
<path d="M809.2 1310 L817.7 1324.8 H800.7 Z" stroke="#ffffff" stroke-width="1.4"/><path d="M809.2 1315 V1319.8" stroke="#ffffff" stroke-width="1.6"/><circle cx="809.2" cy="1322.2" r="0.9" fill="#ffffff"/>
<circle cx="1223.5" cy="1315.8" r="6.3" stroke="#ffffff" stroke-width="1.6"/><path d="M1220.3 1315.8 H1226.7 M1228.3 1320.6 L1233.6 1326" stroke="#ffffff" stroke-width="1.6"/>
<path d="M1616 1310.6 C1613.3 1310.6 1613 1312 1613 1314 V1316.3 C1613 1317.6 1612 1318.2 1610.5 1318.2 C1612 1318.2 1613 1318.8 1613 1320.1 V1322.4 C1613 1324.4 1613.3 1325.6 1616 1325.6" stroke="#ffffff" stroke-width="1.3"/><path d="M1620.2 1310.6 C1622.9 1310.6 1623.2 1312 1623.2 1314 V1316.3 C1623.2 1317.6 1624.2 1318.2 1625.7 1318.2 C1624.2 1318.2 1623.2 1318.8 1623.2 1320.1 V1322.4 C1623.2 1324.4 1622.9 1325.6 1620.2 1325.6" stroke="#ffffff" stroke-width="1.3"/>
<g transform="translate(1785.8 1309) scale(0.8695652173913043 0.8285714285714285)"><path d="M0.2 13.5 C0.2 10 2 8.2 4.5 8.2 H18.5 C21 8.2 22.8 10 22.8 13.5 C22.8 18.3 17.5 20.8 11.5 20.8 C5.5 20.8 0.2 18.3 0.2 13.5 Z" fill="#ffffff"/><rect x="4.4" y="11.2" width="14.2" height="7" rx="1.6" fill="#0278d3"/><rect x="8.3" y="12.6" width="2.1" height="4.3" rx="1" fill="#ffffff"/><rect x="12.6" y="12.6" width="2.1" height="4.3" rx="1" fill="#ffffff"/><rect x="2" y="0.3" width="9.6" height="9.4" rx="4" fill="#ffffff"/><rect x="11.4" y="0.3" width="9.6" height="9.4" rx="4" fill="#ffffff"/><rect x="4.6" y="3" width="4.4" height="4" rx="1.3" fill="#0278d3"/><rect x="14" y="3" width="4.4" height="4" rx="1.3" fill="#0278d3"/></g>
<path d="M1829.5 1318.5 L1834 1323.3 L1843.8 1312 M1838.5 1323.3 L1848.5 1312 M1836.2 1320.8 L1838.5 1323.3" stroke="#ffffff" stroke-width="1.3"/>
<path d="M1949 1309.8 C1945.5 1309.6 1943.3 1312.3 1943.3 1315.8 V1320.5 L1941.6 1324.3 H1956.8 L1954.8 1320.5 V1317.5" stroke="#ffffff" stroke-width="1.4"/><path d="M1947.2 1325 Q1949.2 1327.2 1951.2 1325" stroke="#ffffff" stroke-width="1.4"/><circle cx="1953.5" cy="1312" r="3.3" fill="#ffffff"/>
<circle cx="1342.5" cy="1168.2" r="10.6" stroke="#3794ff" stroke-width="1.6"/><path d="M1342.5 1165.5 V1174" stroke="#3794ff" stroke-width="1.7"/><circle cx="1342.5" cy="1162" r="1.1" fill="#3794ff"/>
<path d="M1909.15 1166.17 L1912.20 1166.20 L1912.20 1169.00 L1909.15 1169.03 L1908.16 1171.43 L1910.29 1173.61 L1908.31 1175.59 L1906.13 1173.46 L1903.73 1174.45 L1903.70 1177.50 L1900.90 1177.50 L1900.87 1174.45 L1898.47 1173.46 L1896.29 1175.59 L1894.31 1173.61 L1896.44 1171.43 L1895.45 1169.03 L1892.40 1169.00 L1892.40 1166.20 L1895.45 1166.17 L1896.44 1163.77 L1894.31 1161.59 L1896.29 1159.61 L1898.47 1161.74 L1900.87 1160.75 L1900.90 1157.70 L1903.70 1157.70 L1903.73 1160.75 L1906.13 1161.74 L1908.31 1159.61 L1910.29 1161.59 L1908.16 1163.77 Z" stroke="#cfcdd1" stroke-width="1.5"/><circle cx="1902.3" cy="1167.6" r="2.3" stroke="#cfcdd1" stroke-width="1.5"/>
<path d="M1934.5 1162.3 L1945.3 1173.1 M1945.3 1162.3 L1934.5 1173.1" stroke="#cfcdd1" stroke-width="1.6"/>
</svg>
</div></div>
<div id="hl"></div>
</body></html>
